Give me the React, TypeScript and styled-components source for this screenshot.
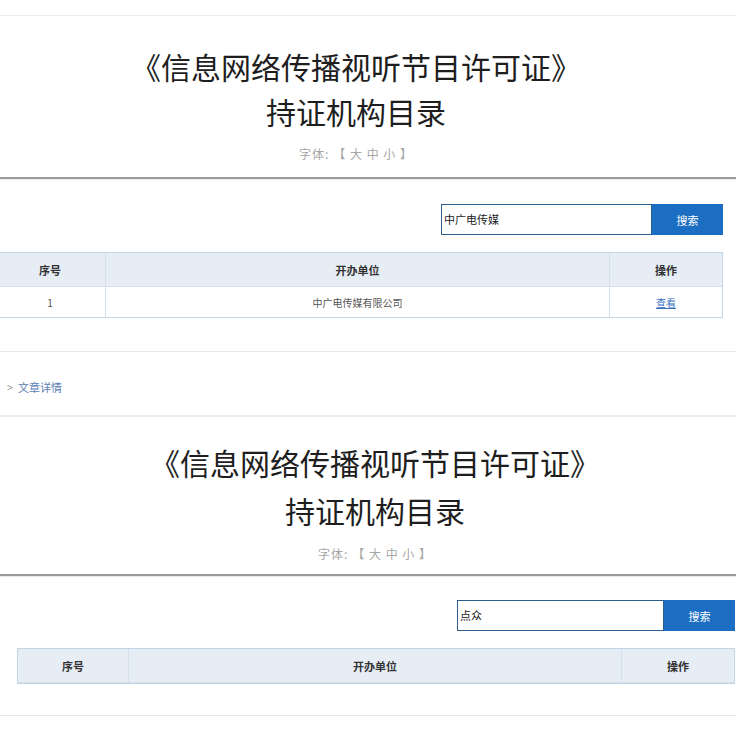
import React from "react";
import styled, { createGlobalStyle } from "styled-components";

const Global = createGlobalStyle`
  html, body { margin: 0; padding: 0; background: #fff; overflow: hidden; }
  body { font-family: "Noto Sans CJK SC", "Noto Sans", sans-serif; color: #333; }
  * { box-sizing: border-box; }
`;

const Screen = styled.div`
  width: 736px;
  height: 736px;
  overflow: hidden;
  padding-top: 15px;
`;

const Header = styled.header<{ $top: number; $bottom: number; $shift: number; $gap: number }>`
  border-top: 1px solid #ececec;
  border-bottom: 2px solid #9b9b9b;
  box-shadow: 0 1px 1px rgba(0, 0, 0, 0.08);
  padding-top: ${(p) => p.$top}px;
  padding-bottom: ${(p) => p.$bottom}px;
  padding-left: ${(p) => Math.max(0, p.$shift * 2)}px;
  padding-right: ${(p) => Math.max(0, -p.$shift * 2)}px;
  display: flex;
  flex-direction: column;
  align-items: center;
  & > h1 { line-height: ${(p) => p.$gap}px; }
`;

const Title = styled.h1`
  margin: 0;
  font-size: 30px;
  font-weight: 400;
  color: #1e1e1e;
  text-align: center;
  white-space: nowrap;
`;

const FontSwitch = styled.div`
  margin-top: 10px;
  font-size: 12px;
  line-height: 20px;
  color: #a6a6a6;
  letter-spacing: 1px;
  display: flex;
  gap: 4px;
`;

const Body = styled.section<{ $top: number; $bottom: number }>`
  border-bottom: 1px solid #e8e8e8;
  padding: ${(p) => p.$top}px 0 ${(p) => p.$bottom}px;
`;

const Content = styled.div<{ $left: number; $width: number }>`
  margin-left: ${(p) => p.$left}px;
  width: ${(p) => p.$width}px;
  display: flex;
  flex-direction: column;
  gap: 17px;
`;

const SearchBar = styled.form`
  align-self: flex-end;
  display: flex;
  height: 31px;
`;

const SearchInput = styled.div<{ $width: number }>`
  width: ${(p) => p.$width}px;
  height: 31px;
  border: 1px solid #2d5f8c;
  font-size: 11px;
  line-height: 29px;
  color: #222;
  padding-left: 2px;
`;

const SearchButton = styled.button`
  width: 71px;
  height: 31px;
  border: none;
  background: #1b6ec2;
  color: #fff;
  font-family: inherit;
  font-size: 11px;
  padding: 0;
`;

const Table = styled.div`
  border: 1px solid #c3d6e8;
  display: grid;
  grid-template-columns: 111px 1fr 112px;
`;

const Cell = styled.div<{ $head?: boolean; $last?: boolean }>`
  height: ${(p) => (p.$head ? 34 : 30)}px;
  display: flex;
  align-items: center;
  justify-content: center;
  background: ${(p) => (p.$head ? "#e6edf5" : "#fff")};
  border-right: ${(p) => (p.$last ? "none" : "1px solid #d3dfeb")};
  border-bottom: ${(p) => (p.$head ? "1px solid #d3dfeb" : "none")};
  font-size: ${(p) => (p.$head ? 11 : 10)}px;
  font-weight: ${(p) => (p.$head ? 700 : 400)};
  color: ${(p) => (p.$head ? "#333" : "#555")};
`;

const Link = styled.a`
  color: #3b6fc0;
  text-decoration: underline;
  cursor: pointer;
`;

const Crumbs = styled.nav`
  height: 64px;
  padding: 6px 0 0 7px;
  display: flex;
  align-items: center;
  gap: 5px;
  font-size: 11px;
  color: #999;
  border-bottom: 1px solid #ececec;
`;

const CrumbLink = styled.span`
  color: #5a7db5;
`;

type PanelProps = {
  query: string;
  rows: { no: number; name: string }[];
  left: number;
  width: number;
  inputWidth: number;
  shift: number;
  headTop: number;
  headBottom: number;
  gap: number;
  bodyTop: number;
  bodyBottom: number;
};

function Panel(p: PanelProps) {
  return (
    <>
      <Header $top={p.headTop} $bottom={p.headBottom} $shift={p.shift} $gap={p.gap}>
        <Title>《信息网络传播视听节目许可证》</Title>
        <Title>持证机构目录</Title>
        <FontSwitch>
          <span>字体:</span>
          <span>【 大 中 小 】</span>
        </FontSwitch>
      </Header>
      <Body $top={p.bodyTop} $bottom={p.bodyBottom}>
        <Content $left={p.left} $width={p.width}>
          <SearchBar onSubmit={(e) => e.preventDefault()}>
            <SearchInput $width={p.inputWidth}>{p.query}</SearchInput>
            <SearchButton type="button">搜索</SearchButton>
          </SearchBar>
          <Table>
            <Cell $head>序号</Cell>
            <Cell $head>开办单位</Cell>
            <Cell $head $last>操作</Cell>
            {p.rows.map((r) => (
              <React.Fragment key={r.no}>
                <Cell>{r.no}</Cell>
                <Cell>{r.name}</Cell>
                <Cell $last>
                  <Link>查看</Link>
                </Cell>
              </React.Fragment>
            ))}
          </Table>
        </Content>
      </Body>
    </>
  );
}

export default function App() {
  return (
    <Screen>
      <Global />
      <Panel
        query="中广电传媒"
        rows={[{ no: 1, name: "中广电传媒有限公司" }]}
        left={-6}
        width={729}
        inputWidth={211}
        shift={-12}
        headTop={28}
        headBottom={13}
        gap={45}
        bodyTop={25}
        bodyBottom={33}
      />
      <Crumbs>
        <span>&gt;</span>
        <CrumbLink>文章详情</CrumbLink>
      </Crumbs>
      <Panel
        query="点众"
        rows={[]}
        left={17}
        width={718}
        inputWidth={207}
        shift={7}
        headTop={21}
        headBottom={10}
        gap={48}
        bodyTop={24}
        bodyBottom={31}
      />
    </Screen>
  );
}
